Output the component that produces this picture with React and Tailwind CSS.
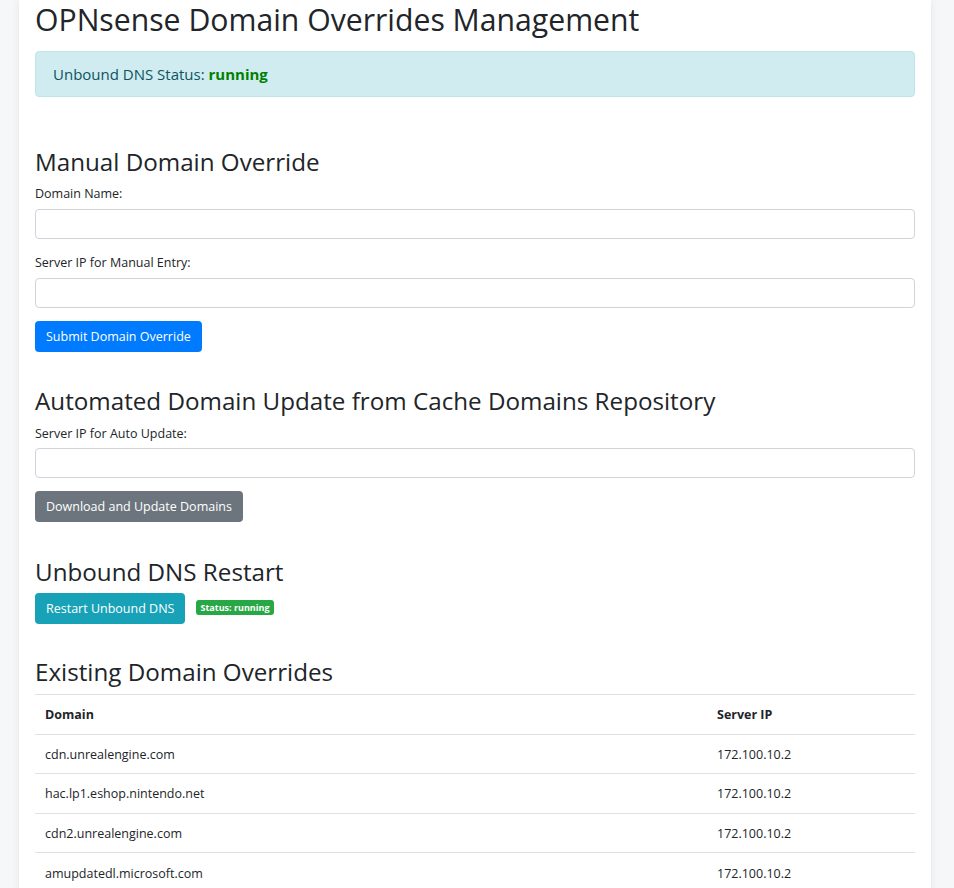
import React from "react";

const rows = [
  ["cdn.unrealengine.com", "172.100.10.2"],
  ["hac.lp1.eshop.nintendo.net", "172.100.10.2"],
  ["cdn2.unrealengine.com", "172.100.10.2"],
  ["amupdatedl.microsoft.com", "172.100.10.2"],
];

function Label({ children, className = "" }) {
  return (
    <div className={"h-5 leading-5 text-[12.5px] text-[#212529] " + className}>{children}</div>
  );
}

function Input({ className = "" }) {
  return (
    <input
      type="text"
      className={"block w-full h-[30px] rounded-[4px] border border-[#ced4da] bg-white " + className}
    />
  );
}

export default function App() {
  return (
    <div
      className="min-h-screen bg-[#f6f7f9] overflow-hidden"
      style={{ fontFamily: '"Open Sans", "Noto Sans", sans-serif' }}
    >
      <div className="ml-[19px] w-[912px] bg-white px-4 pb-10 shadow-[0_0_8px_rgba(0,0,0,0.08)] text-[#212529]">
        <h1 className="h-[40px] leading-[40px] text-[30.2px] font-normal">
          OPNsense Domain Overrides Management
        </h1>
        <div className="mt-[11px] h-[46px] flex items-center pl-[17px] rounded-[4px] border border-[#bee5eb] bg-[#d1ecf1] text-[#0c5460] text-[15px]">
          Unbound DNS Status:&nbsp;<b className="text-[#008000]">running</b>
        </div>

        <h2 className="mt-[49px] h-[31px] leading-[31px] text-[24.2px] font-normal">Manual Domain Override</h2>
        <Label className="mt-[7px]">Domain Name:</Label>
        <Input className="mt-[5px]" />
        <Label className="mt-[14px]">Server IP for Manual Entry:</Label>
        <Input className="mt-[5px]" />
        <button className="mt-[13px] h-[31px] pt-[2px] px-[11px] rounded-[4px] bg-[#007bff] text-white text-[12.5px]">
          Submit Domain Override
        </button>

        <h2 className="mt-[33px] h-[31px] leading-[31px] text-[24.2px] font-normal">
          Automated Domain Update from Cache Domains Repository
        </h2>
        <Label className="mt-[8px]">Server IP for Auto Update:</Label>
        <Input className="mt-[4px]" />
        <button className="block mt-[13px] h-[31px] pt-[2px] px-[11px] rounded-[4px] bg-[#6c757d] text-white text-[12.5px]">
          Download and Update Domains
        </button>

        <h2 className="mt-[34px] h-[31px] leading-[31px] text-[24.2px] font-normal">Unbound DNS Restart</h2>
        <div className="mt-[6px] flex items-start">
          <button className="h-[31px] pt-[2px] px-[11px] rounded-[4px] bg-[#17a2b8] text-white text-[12.5px]">
            Restart Unbound DNS
          </button>
          <span className="ml-[11px] mt-[7px] h-[15px] px-[4px] leading-[15px] rounded-[3px] bg-[#28a745] text-white text-[9px] font-bold">
            Status: running
          </span>
        </div>

        <h2 className="mt-[32px] h-[31px] leading-[31px] text-[24.2px] font-normal">Existing Domain Overrides</h2>
        <table className="mt-[7px] w-full border-collapse text-[12.5px]">
          <thead>
            <tr className="h-[39.5px] border-t border-b border-[#dee2e6]">
              <th className="text-left font-bold px-[10px] pt-[3px] w-[672px]">Domain</th>
              <th className="text-left font-bold px-[10px] pt-[3px]">Server IP</th>
            </tr>
          </thead>
          <tbody>
            {rows.map(([d, ip]) => (
              <tr key={d} className="h-[39.5px] border-t border-[#dee2e6]">
                <td className="px-[10px] pt-[3px]">{d}</td>
                <td className="px-[10px] pt-[3px]">{ip}</td>
              </tr>
            ))}
          </tbody>
        </table>
      </div>
    </div>
  );
}
